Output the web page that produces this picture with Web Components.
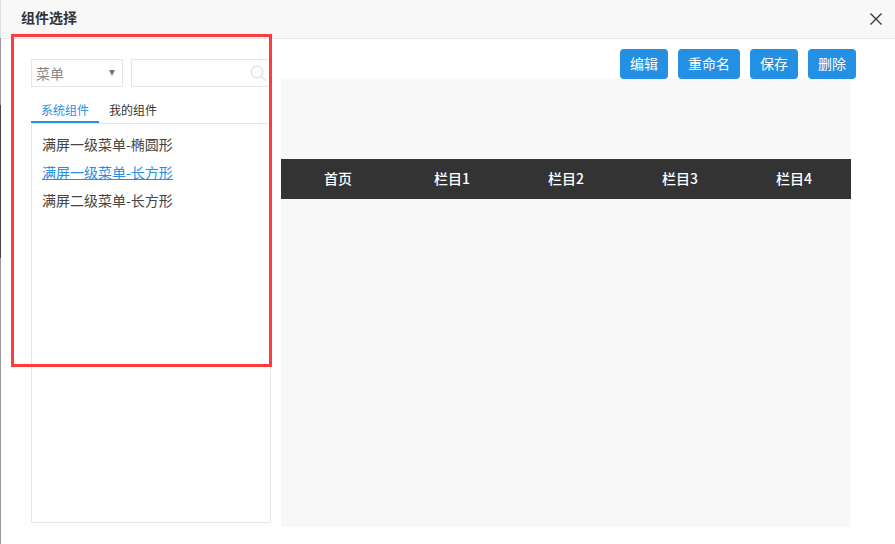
<!DOCTYPE html>
<html lang="zh"><head><meta charset="utf-8">
<style>
html,body{margin:0;padding:0;background:#fff}
body{font-family:"Noto Sans CJK SC","Liberation Sans",sans-serif;color:#333}
</style></head>
<body>
<comp-dialog title-text="组件选择">
  <comp-sidebar>
    <comp-item>满屏一级菜单-椭圆形</comp-item>
    <comp-item active>满屏一级菜单-长方形</comp-item>
    <comp-item>满屏二级菜单-长方形</comp-item>
  </comp-sidebar>
  <comp-preview>
    <comp-button slot="actions">编辑</comp-button>
    <comp-button slot="actions">重命名</comp-button>
    <comp-button slot="actions">保存</comp-button>
    <comp-button slot="actions">删除</comp-button>
    <comp-nav>
      <comp-nav-item>首页</comp-nav-item>
      <comp-nav-item>栏目1</comp-nav-item>
      <comp-nav-item>栏目2</comp-nav-item>
      <comp-nav-item>栏目3</comp-nav-item>
      <comp-nav-item>栏目4</comp-nav-item>
    </comp-nav>
  </comp-preview>
</comp-dialog>
<script>
function def(name, html, init){
  customElements.define(name, class extends HTMLElement{
    constructor(){super();this.attachShadow({mode:'open'}).innerHTML=html;}
    connectedCallback(){ if(init) init(this); }
  });
}
def('comp-dialog',`<style>
:host{display:flex;position:relative;width:895px;height:544px;overflow:hidden;background:#fff}
.strip{flex:none;width:1px;background:linear-gradient(to bottom,#e0e0e0 0 38px,#999 38px 105px,#444 105px 258px,#999 258px)}
.main{flex:1;min-width:0;display:flex;flex-direction:column}
header{flex:none;height:38px;border-bottom:1px solid #ebebeb;background:#f8f8f8;display:flex;align-items:center;justify-content:space-between;padding:0 12px 0 20px}
h1{margin:0 0 4px;font-size:14px;font-weight:700;line-height:34px;color:#333}
svg{display:block}
.body{flex:1;display:flex;gap:10px;padding:20px 0 0 30px;min-height:0}
.mark{position:absolute;left:11px;top:34px;width:255px;height:327px;border:3px solid #ff3b3b;pointer-events:none}
</style>
<div class="strip"></div>
<div class="main">
<header><h1></h1><svg width="14" height="14" viewBox="0 0 14 14"><path d="M1.5 1.5 12.5 12.5M12.5 1.5 1.5 12.5" stroke="#333" stroke-width="1.3" fill="none"/></svg></header>
<div class="body"><slot></slot></div>
</div>
<div class="mark"></div>`, el=>{el.shadowRoot.querySelector('h1').textContent=el.getAttribute('title-text');});
def('comp-sidebar',`<style>
:host{display:flex;flex-direction:column;flex:none;width:240px;height:464px}
.row{display:flex;gap:8px;height:28px;flex:none}
.sel{box-sizing:border-box;width:92px;border:1px solid #e6e6e6;display:flex;align-items:center;justify-content:space-between;padding:0 7px 0 4px;font-size:14px;color:#888}
.arrow{width:0;height:0;border-left:3px solid transparent;border-right:3px solid transparent;border-top:6px solid #777}
.inp{box-sizing:border-box;flex:1;border:1px solid #e6e6e6;display:flex;align-items:center;justify-content:flex-end;padding-right:3px}
.tabs{display:flex;height:36px;flex:none;box-sizing:border-box;padding-top:12px;font-size:12px;line-height:22px}
.tab{box-sizing:border-box;height:24px;text-align:center;width:68px;color:#333}
.tab.on{color:#2490e3;border-bottom:2px solid #2490e3}
.tab+.tab{width:68px}
.panel{flex:1;box-sizing:border-box;border:1px solid #e6e6e6;padding:7px 10px;display:flex;flex-direction:column}
svg{display:block}
</style>
<div class="row">
 <div class="sel"><span>菜单</span><i class="arrow"></i></div>
 <div class="inp"><svg width="17" height="17" viewBox="0 0 17 17" fill="none" stroke="#e2e2e2" stroke-width="1.3"><circle cx="7" cy="7" r="5.8"/><path d="M11 11l4.5 4.5"/></svg></div>
</div>
<div class="tabs"><div class="tab on">系统组件</div><div class="tab">我的组件</div></div>
<div class="panel"><slot></slot></div>`);
def('comp-item',`<style>
:host{display:block;height:28px;line-height:26px;font-size:14px;color:#444;white-space:nowrap}
:host([active]){color:#2490e3;text-decoration:underline}
</style><slot></slot>`);
def('comp-preview',`<style>
:host{display:flex;flex-direction:column;flex:none;width:570px;height:488px;margin-top:-10px}
.acts{display:flex;justify-content:flex-end;gap:10px;height:30px;flex:none;margin-right:-5px}
.canvas{height:448px;flex:none;background:#f8f8f8;padding-top:80px;box-sizing:border-box}
</style>
<div class="acts"><slot name="actions"></slot></div>
<div class="canvas"><slot></slot></div>`);
def('comp-button',`<style>
:host{display:block;box-sizing:border-box;height:30px;padding:0 10px;line-height:28px;background:#2490e3;color:#fff;border-radius:4px;font-size:14px;white-space:nowrap}
</style><slot></slot>`);
def('comp-nav',`<style>
:host{display:flex;height:40px;background:#333}
</style><slot></slot>`);
def('comp-nav-item',`<style>
:host{display:block;width:114px;height:40px;text-align:center;line-height:38px;color:#fff;font-size:14px;font-weight:500}
</style><slot></slot>`);
</script>
</body></html>
